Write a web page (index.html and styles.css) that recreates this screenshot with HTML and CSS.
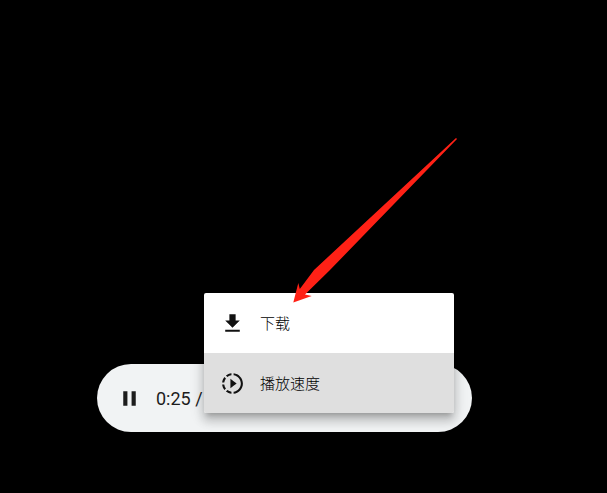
FILE: index.html
```html
<!DOCTYPE html>
<html lang="zh-CN">
<head>
    <meta charset="UTF-8">
    <title>音频播放器</title>
    <link rel="stylesheet" href="styles.css">
</head>
<body>
    <div class="player">
        <svg class="pause-icon" viewBox="0 0 24 24"><path d="M6 19h4V5H6v14zm8-14v14h4V5h-4z"/></svg>
        <span class="time">0:25 /</span>

        <!-- 下拉菜单 -->
        <div class="menu">
            <div class="menu-item">
                <svg class="menu-icon" viewBox="0 0 24 24"><path d="M19 9h-4V3H9v6H5l7 7 7-7zM5 18v2h14v-2H5z"/></svg>
                <span class="menu-label">下载</span>
            </div>
            <div class="menu-item active">
                <svg class="menu-icon" viewBox="0 0 24 24"><path d="M13.05 9.79L10 7.5v9l3.05-2.29L16 12zM11 4.07V2.05c-2.01.2-3.84 1-5.32 2.21L7.1 5.69c1.11-.86 2.44-1.44 3.9-1.62zM5.69 7.1L4.26 5.68C3.05 7.16 2.25 8.99 2.05 11h2.02c.18-1.46.76-2.79 1.62-3.9zM4.07 13H2.05c.2 2.01 1 3.84 2.21 5.32l1.43-1.43c-.86-1.1-1.44-2.43-1.62-3.89zm1.61 6.74C7.16 20.95 9 21.75 11 21.95v-2.02c-1.46-.18-2.79-.76-3.9-1.62l-1.42 1.43zM22 12c0 5.16-3.92 9.42-8.95 9.95v-2.02C16.97 19.41 20 16.05 20 12s-3.03-7.41-6.95-7.93V2.05C18.08 2.58 22 6.84 22 12z"/></svg>
                <span class="menu-label">播放速度</span>
            </div>
        </div>
    </div>

    <!-- 红色标注箭头 -->
    <svg class="arrow" viewBox="0 0 607 493"><polygon points="456,138 457,139 330,270 305,294.5 311.7,296 293.3,302.5 298.3,283 299.8,289 314,270"/></svg>
</body>
</html>
```

FILE: styles.css
```css
html, body {
    height: 100%;
}

body {
    margin: 0;
    padding: 364px 0 0 97px;
    box-sizing: border-box;
    background-color: #000;
    font-family: "Roboto", "Noto Sans CJK SC", sans-serif;
    overflow: hidden;
}

.player {
    position: relative;
    display: flex;
    align-items: center;
    width: 375px;
    height: 68px;
    padding-left: 20px;
    box-sizing: border-box;
    border-radius: 34px;
    background-color: #f1f3f4;
    color: #1c1c1c;
}

.pause-icon {
    width: 25px;
    height: 25px;
    fill: #1c1c1c;
}

.time {
    margin-left: 14px;
    font-size: 18px;
    white-space: pre;
}

.menu {
    position: absolute;
    top: -71px;
    left: 107px;
    width: 250px;
    border-radius: 2px;
    overflow: hidden;
    background-color: #fff;
    box-shadow: 0 5px 5px -3px rgba(0, 0, 0, 0.2),
                0 8px 10px 1px rgba(0, 0, 0, 0.14),
                0 3px 14px 2px rgba(0, 0, 0, 0.12);
}

.menu-item {
    display: flex;
    align-items: center;
    gap: 15px;
    height: 60px;
    padding-left: 16px;
    font-family: "Noto Sans CJK SC", sans-serif;
    font-size: 15px;
    font-weight: 300;
    color: #000;
}

.menu-item.active {
    background-color: #dfdfdf;
}

.menu-label {
    padding-bottom: 2px;
}

.menu-icon {
    width: 25px;
    height: 25px;
    fill: #111;
}

.arrow {
    position: absolute;
    top: 0;
    left: 0;
    width: 607px;
    height: 493px;
    pointer-events: none;
}

.arrow polygon {
    fill: #ff2116;
}
```
